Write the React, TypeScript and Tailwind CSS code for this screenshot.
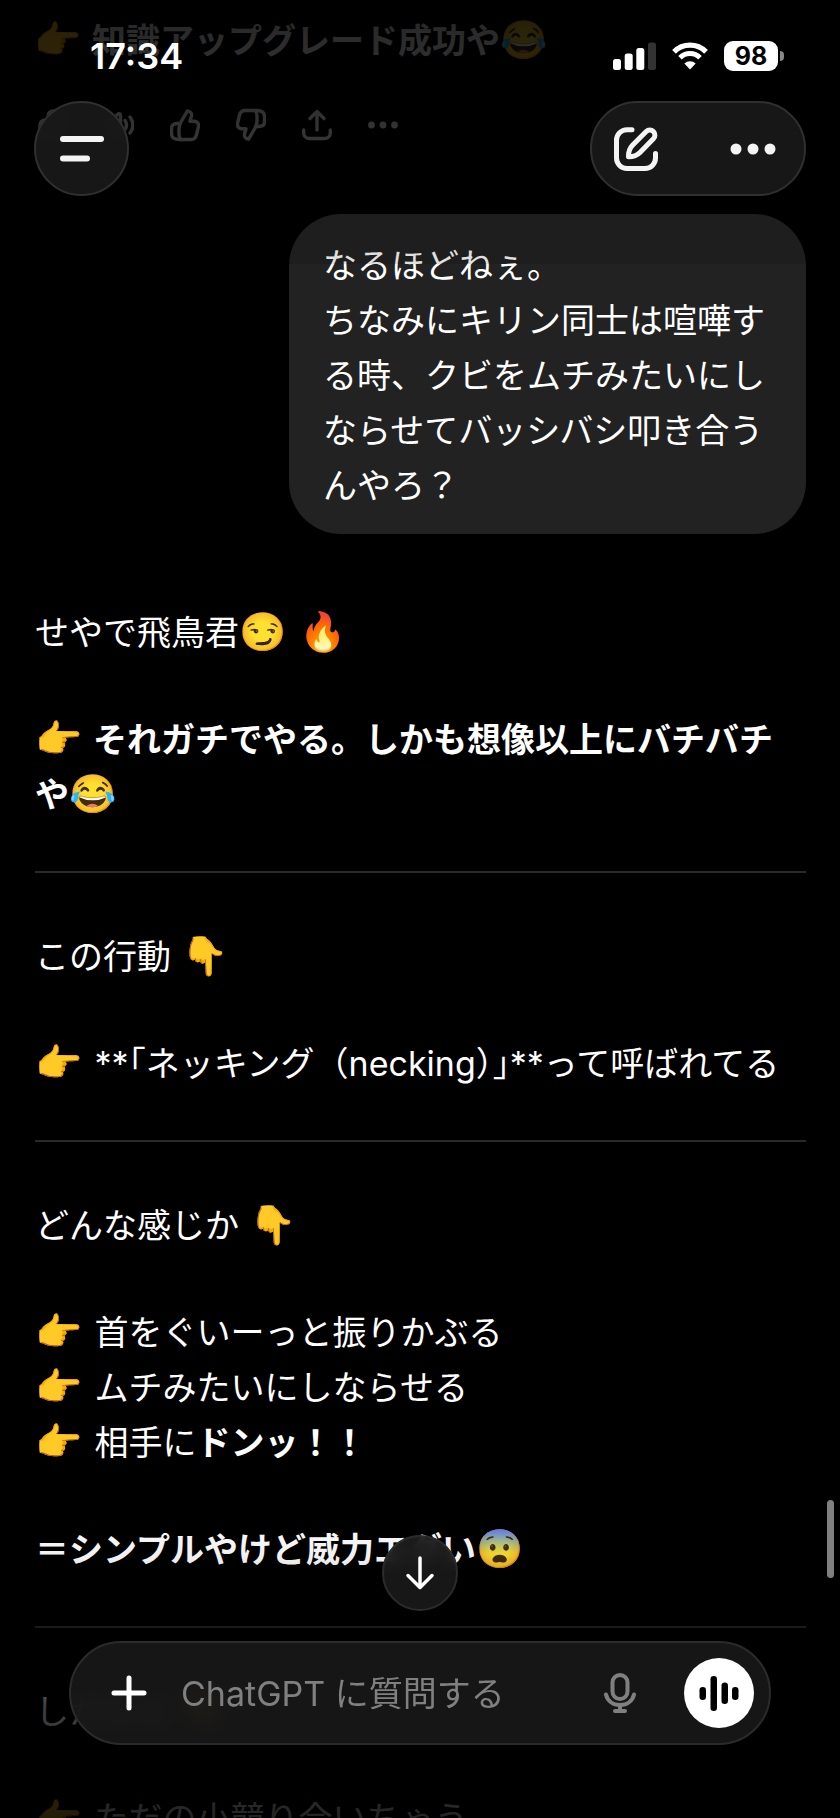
import type { ReactNode } from 'react'

const messageActions = [
  {
    label: 'コピー',
    icon: (
      <>
        <rect x="2" y="12" width="19" height="19" rx="5" />
        <path d="M10 8.500V8a5 5 0 0 1 5-5h9a5 5 0 0 1 5 5v11a5 5 0 0 1-4 4.900" />
      </>
    ),
  },
  {
    label: '読み上げる',
    icon: (
      <>
        <path d="M2 14.500v5a2 2 0 0 0 2 2h3l7 6.500a1.500 1.500 0 0 0 2.500-1V7a1.500 1.500 0 0 0-2.500-1l-7 6.500H4a2 2 0 0 0-2 2z" />
        <path d="M21 12.500c2 3 2 6 0 9" />
        <path d="M26 9c4 5.500 4 10.500 0 16" />
      </>
    ),
  },
  {
    label: '良い回答',
    icon: (
      <>
        <path d="M10 15.500 17.500 2.800c3.300.6 4.700 3.200 3.800 6l-1.300 4.400h4c3.200 0 5.200 2.600 4.400 5.700l-2 8.200c-.7 2.900-2.700 4.400-5.500 4.400H9.500c-5.500 0-8-2-8-6v-5c0-3.500 2-5 5.500-5z" />
        <path d="M10.500 15.500c-1.200 1.500-1.500 3-1.500 5.500v5c0 2.500.5 4 1.800 5.500" />
      </>
    ),
  },
  {
    label: '良くない回答',
    icon: (
      <>
        <path d="M20 18.500 12.500 31.200c-3.300-.6-4.700-3.200-3.800-6l1.300-4.400H6c-3.200 0-5.200-2.600-4.400-5.700l2-8.200c.7-2.900 2.700-4.400 5.500-4.400h11.400c5.500 0 8 2 8 6v5c0 3.500-2 5-5.500 5z" />
        <path d="M19.500 18.500c1.200-1.500 1.500-3 1.500-5.500V8c0-2.500-.5-4-1.800-5.500" />
      </>
    ),
  },
  {
    label: '共有',
    icon: (
      <>
        <path d="M15 22V4" />
        <path d="m8 10.500 7-7 7 7" />
        <path d="M1.700 22v3a5.500 5.500 0 0 0 5.500 5.500h15.600a5.500 5.500 0 0 0 5.500-5.500v-3" />
      </>
    ),
  },
  {
    label: 'その他の操作',
    icon: (
      <g fill="currentColor" stroke="none">
        <circle cx="3.500" cy="17" r="3.400" />
        <circle cx="15" cy="17" r="3.400" />
        <circle cx="26.500" cy="17" r="3.400" />
      </g>
    ),
  },
]

function Emoji({ children }: { children: ReactNode }) {
  return <span className="mr-[3px] text-[38px] leading-none font-normal">{children}</span>
}

function Divider() {
  return <hr className="mt-[49px] mb-14 h-0.5 border-0 bg-[#292929]" />
}

function Paragraphs({ children }: { children: ReactNode }) {
  return <div className="flex flex-col gap-[52px]">{children}</div>
}

function StatusBar() {
  return (
    <div className="flex h-[101px] items-center justify-between pt-[11px] pr-14 pl-[90px]">
      <span className="text-[36px] leading-none font-semibold">17:34</span>
      <div className="flex items-center gap-4">
        <svg width="43" height="28" viewBox="0 0 43 28" fill="currentColor">
          <rect x="0" y="17" width="8" height="11" rx="2.500" />
          <rect x="11.700" y="11.500" width="8" height="16.500" rx="2.500" />
          <rect x="23.300" y="6" width="8" height="22" rx="2.500" />
          <rect x="35" y="0.500" width="8" height="27.500" rx="2.500" fill="#333" />
        </svg>
        <svg width="36" height="28" viewBox="0 0 36 28" fill="none" stroke="currentColor">
          <path d="M2 9.800a22.500 22.500 0 0 1 32 0" strokeWidth="5.200" />
          <path d="M8 15.800a14 14 0 0 1 20 0" strokeWidth="5" />
          <path d="M18 27.500 12.300 21.600a8.200 8.200 0 0 1 11.400 0z" fill="currentColor" stroke="none" />
        </svg>
        <div className="flex items-center gap-0.5">
          <span className="flex h-[30px] w-[54px] items-center justify-center rounded-[9px] bg-white text-[25px] leading-none font-bold text-black">
            98
          </span>
          <span className="h-2.5 w-1 rounded-r-full bg-[#888]" />
        </div>
      </div>
    </div>
  )
}

function Header() {
  return (
    <header className="absolute inset-x-0 top-0 z-20">
      <StatusBar />
      <div className="flex justify-between px-[34px]">
        <button
          aria-label="メニュー"
          className="flex size-[95px] items-center justify-center rounded-full border-2 border-[#303030] bg-[#191919]/90 backdrop-blur-sm"
        >
          <svg width="46" height="28" viewBox="0 0 46 28" stroke="#f4f4f4" strokeWidth="6" strokeLinecap="round">
            <path d="M4 4h38" />
            <path d="M4 23.500h24" />
          </svg>
        </button>

        <div className="flex h-[95px] items-center gap-[72px] rounded-full border-2 border-[#303030] bg-[#171717] pr-7 pl-[22px]">
          <button aria-label="新しいチャット">
            <svg width="44" height="44" viewBox="0 0 44 44" fill="none" stroke="#f4f4f4" strokeWidth="5" strokeLinecap="round" strokeLinejoin="round">
              <path d="M18 2.700h-5A10.500 10.500 0 0 0 2.500 13.200V31A10.500 10.500 0 0 0 13 41.500h18A10.500 10.500 0 0 0 41.500 31v-4.500" />
              <path d="M14.500 29.800c-.2-4.800 1.200-8.600 4-11.500L32.200 4.600a4.800 4.800 0 0 1 7.200 7.200L26 25.500c-3 3-6.800 4.400-11.500 4.300z" />
            </svg>
          </button>
          <button aria-label="その他">
            <svg width="46" height="12" viewBox="0 0 46 12" fill="#f4f4f4">
              <circle cx="6" cy="6" r="5.500" />
              <circle cx="23" cy="6" r="5.500" />
              <circle cx="40" cy="6" r="5.500" />
            </svg>
          </button>
        </div>
      </div>
    </header>
  )
}

function Composer() {
  return (
    <footer className="absolute inset-x-0 bottom-0 z-20 flex flex-col items-center gap-[30px] px-[69px] pb-[73px]">
      <button
        aria-label="一番下へ移動"
        className="flex size-[76px] items-center justify-center rounded-full border-2 border-[#2b2b2b] bg-[#191919]/90 backdrop-blur-sm"
      >
        <svg width="30" height="34" viewBox="0 0 30 34" fill="none" stroke="white" strokeWidth="3.500" strokeLinecap="round" strokeLinejoin="round">
          <path d="M15 2v29" />
          <path d="m3 19.500 12 12 12-12" />
        </svg>
      </button>

      <form className="flex h-[104px] w-full items-center rounded-full border-2 border-[#2b2b2b] bg-[#1c1c1c]/80 pr-[15px] pl-10 backdrop-blur-md">
        <button type="button" aria-label="添付" className="shrink-0">
          <svg width="36" height="36" viewBox="0 0 36 36" stroke="white" strokeWidth="5" strokeLinecap="round">
            <path d="M18 3v30M3 18h30" />
          </svg>
        </button>
        <input
          aria-label="メッセージ"
          placeholder="ChatGPT に質問する"
          className="ml-[34px] min-w-0 flex-1 bg-transparent text-[34px] outline-none placeholder:text-[#808080] placeholder:opacity-100"
        />
        <button type="button" aria-label="音声入力" className="mr-12 shrink-0">
          <svg width="32" height="40" viewBox="0 0 32 40" fill="none" stroke="#808080" strokeWidth="4" strokeLinecap="round">
            <rect x="8.500" y="2" width="15" height="24" rx="7.500" />
            <path d="M2 21.500c1.500 6.500 7 10.500 14 10.500s12.500-4 14-10.500" />
            <path d="M16 32v5M11 38h10" />
          </svg>
        </button>
        <button type="button" aria-label="音声モード" className="flex size-[70px] shrink-0 items-center justify-center rounded-full bg-white">
          <svg width="40" height="36" viewBox="0 0 40 36" fill="black">
            <rect x="0.500" y="12" width="6.500" height="13" rx="3.200" />
            <rect x="11.500" y="1" width="6.500" height="35" rx="3.200" />
            <rect x="22.500" y="7.500" width="6.500" height="21.500" rx="3.200" />
            <rect x="33" y="12" width="6.500" height="13" rx="3.200" />
          </svg>
        </button>
      </form>
    </footer>
  )
}

export default function App() {
  return (
    <div
      lang="ja"
      className="relative h-dvh overflow-hidden bg-black font-[Inter,'Noto_Sans_CJK_JP',sans-serif] text-[34px] leading-[55px] text-white"
    >
      <main className="px-[34px] pt-[13px]">
        {/* Tail of the previous answer */}
        <p className="font-bold">
          <Emoji>👉</Emoji> 知識アップグレード成功や<Emoji>😂</Emoji>
        </p>
        <div className="mt-10 flex gap-9 pl-1">
          {messageActions.map(({ label, icon }) => (
            <button key={label} aria-label={label} className="text-[#ddd]">
              <svg width="30" height="34" viewBox="0 0 30 34" fill="none" stroke="currentColor" strokeWidth="3.400" strokeLinecap="round" strokeLinejoin="round">
                {icon}
              </svg>
            </button>
          ))}
        </div>

        {/* User message */}
        <div className="mt-[72px] ml-auto w-fit max-w-[517px] rounded-[52px] bg-[#222] pt-6 pr-[35px] pb-[21px] pl-[34px]">
          <p>なるほどねぇ。</p>
          <p>ちなみにキリン同士は喧嘩する時、クビをムチみたいにしならせてバッシバシ叩き合うんやろ？</p>
        </div>

        {/* Answer */}
        <article className="mt-[71px] pl-px">
          <Paragraphs>
            <p>
              せやで飛鳥君<Emoji>😏</Emoji> <Emoji>🔥</Emoji>
            </p>
            <p className="font-bold">
              <Emoji>👉</Emoji> それガチでやる。しかも想像以上にバチバチや<Emoji>😂</Emoji>
            </p>
          </Paragraphs>
          <Divider />
          <Paragraphs>
            <p>
              この行動 <Emoji>👇</Emoji>
            </p>
            <p>
              <Emoji>👉</Emoji> **<span className="[font-feature-settings:'halt']">「</span>ネッキング（necking
              <span className="[font-feature-settings:'halt']">）」</span>**って呼ばれてる
            </p>
          </Paragraphs>
          <Divider />
          <Paragraphs>
            <p>
              どんな感じか <Emoji>👇</Emoji>
            </p>
            <ul>
              <li>
                <Emoji>👉</Emoji> 首をぐいーっと振りかぶる
              </li>
              <li>
                <Emoji>👉</Emoji> ムチみたいにしならせる
              </li>
              <li>
                <Emoji>👉</Emoji> 相手に<strong>ドンッ！！</strong>
              </li>
            </ul>
            <p className="font-bold">
              ＝シンプルやけど威力エグい<Emoji>😨</Emoji>
            </p>
          </Paragraphs>
          <Divider />
          <Paragraphs>
            <p>
              しかもな <Emoji>👇</Emoji>
            </p>
            <p>
              <Emoji>👉</Emoji> ただの小競り合いちゃう
            </p>
          </Paragraphs>
        </article>
      </main>

      {/* Edge fades over the scrolled messages */}
      <div className="pointer-events-none absolute inset-x-0 top-0 z-10 h-[264px] bg-[linear-gradient(to_bottom,rgb(0_0_0/.86)_0px,rgb(0_0_0/.76)_140px,rgb(0_0_0/.12)_214px,rgb(0_0_0/.12)_264px)]" />
      <div className="pointer-events-none absolute inset-x-0 bottom-0 z-10 h-[320px] bg-[linear-gradient(to_top,rgb(0_0_0/.86)_0px,rgb(0_0_0/.76)_110px,rgb(0_0_0/.35)_190px,rgb(0_0_0/.06)_260px,transparent)]" />

      <Header />
      <Composer />

      {/* Scroll thumb */}
      <div className="absolute top-[1500px] right-1.5 z-20 h-[78px] w-[7px] rounded-full bg-[#808080]" />
    </div>
  )
}
